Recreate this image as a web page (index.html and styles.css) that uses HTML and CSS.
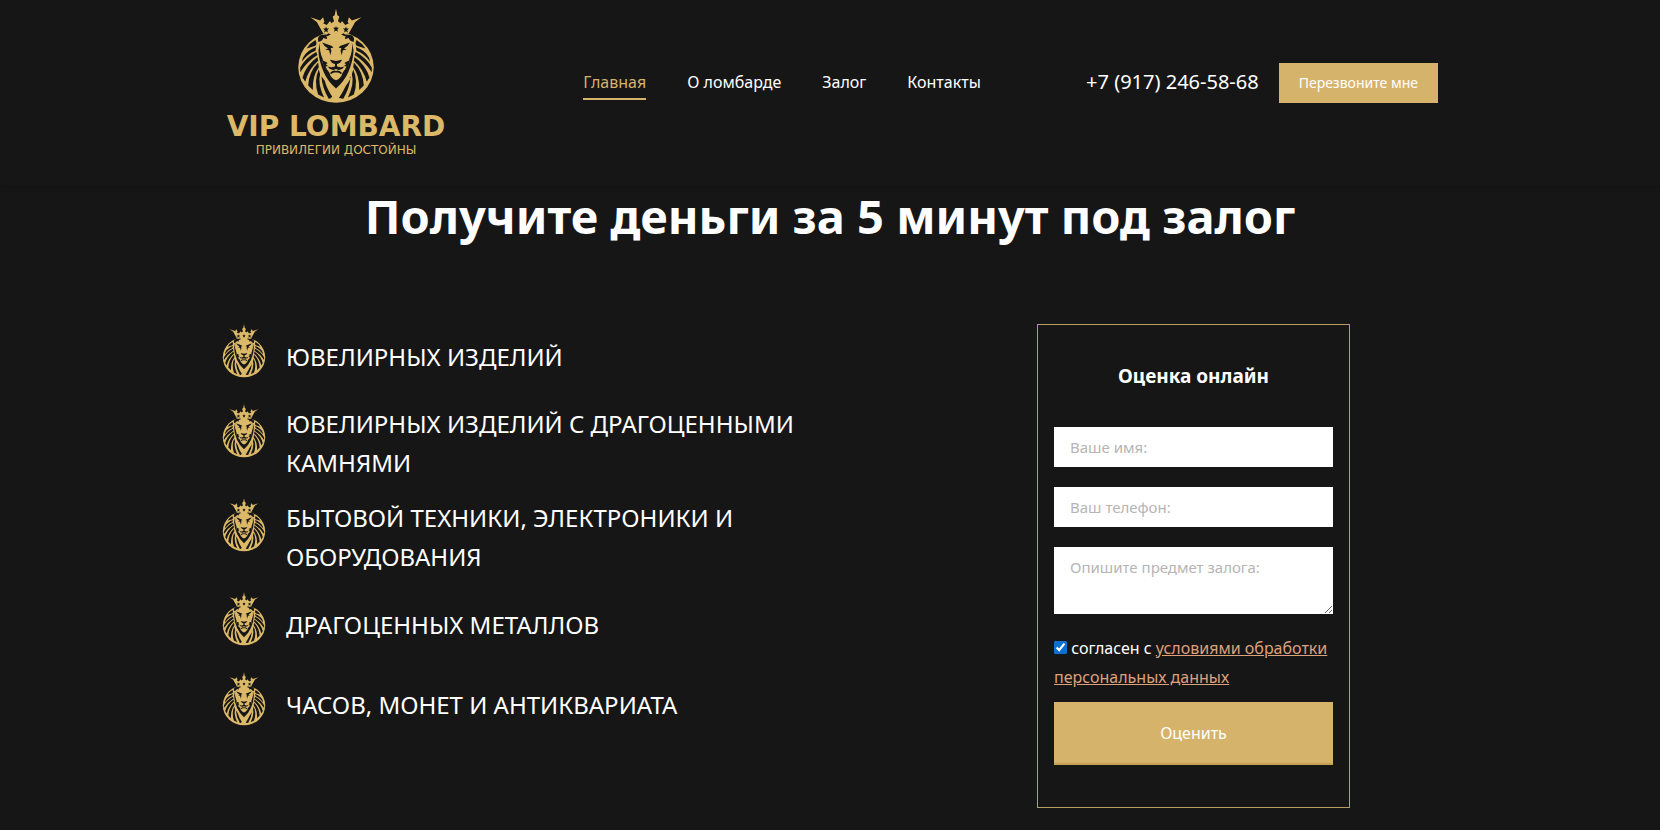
FILE: index.html
```html
<!DOCTYPE html>
<html lang="ru">
<head>
  <meta charset="UTF-8">
  <meta name="viewport" content="width=device-width, initial-scale=1.0">
  <title>VIP Lombard</title>
  <link rel="stylesheet" href="styles.css">
</head>
<body>
  <!-- Lion emblem, used in the logo and as list marker -->
  <svg class="sprite" aria-hidden="true">
    <symbol id="lion" viewBox="18 22 236 290">
      <g fill="#dcb968">
        <path d="M98 100 L78 64 L59 50 L88 60 L97 50 L101 64 L97 68 L108 73 L118 61 L122 68 L130 62 L126 48 L132 44 L136 24 L140 44 L146 48 L142 62 L150 68 L154 61 L164 73 L175 68 L171 64 L175 50 L184 60 L213 50 L194 64 L174 100 Z"/>
        <ellipse cx="136" cy="201" rx="114" ry="107"/>
      </g>
      <g fill="#161616">
        <path id="star" d="M136 76 L138.500 82 L145 82 L140 87 L142 94 L136 90 L130 94 L132 87 L127 82 L133.500 82 Z"/>
        <use href="#star" x="-30" y="2"/>
        <use href="#star" x="30" y="2"/>
        <g id="mane">
          <!-- ear -->
          <path d="M82 124 Q79 103 96 103 Q110 104 114 98 L120 102 Q112 107 106 108 Q112 111 108 116 L98 113 Q94 124 82 124 Z"/>
          <!-- slits between the locks -->
          <path d="M74 119 Q58 128 47 144 L74 136 Q80 130 74 119 Z"/>
          <path d="M76 140 Q48 150 36 172 L33 184 Q50 160 74 151 Z"/>
          <path d="M76 155 Q42 174 28 202 L28 216 Q50 182 80 164 Z"/>
          <path d="M80 170 Q46 194 35 232 L43 245 Q53 206 82 181 Z"/>
          <path d="M82 187 Q54 216 52 256 L66 270 Q64 228 84 201 Z"/>
          <path d="M84 208 Q68 242 82 283 L100 292 Q80 250 88 222 Z"/>
          <path d="M92 228 Q94 262 114 296 L127 294 Q108 266 102 242 Z"/>
          <!-- side of the face and chin -->
          <path d="M88 126 Q85 155 96 176 Q94 190 100 202 Q114 208 120 228 Q128 239 136 240 L136 265 Q110 242 99 216 Q84 182 83 150 Z"/>
          <!-- brow and eye -->
          <path d="M94 126 L124 137 L128 142 L120 143 L122 151 L119 165 L115 150 L103 147 L112 144 Q101 139 94 126 Z"/>
          <!-- nose and mouth -->
          <path d="M118 178 L136 182 L136 206 L128 209 Q114 208 112 199 Q124 204 133 198 L133 191 Q121 188 118 178 Z"/>
          <path d="M118 218 Q128 208 136 212 L136 217 Q126 215 121 222 Z"/>
          <path d="M96 180 L111 188 L105 192 L112 197 L104 199 L109 207 L98 202 Z"/>
        </g>
        <use href="#mane" transform="translate(272 0) scale(-1 1)"/>
      </g>
      <!-- locks crossing under the chin -->
      <path d="M176 232 Q160 262 122 300" fill="none" stroke="#dcb968" stroke-width="10"/>
    </symbol>
  </svg>

  <header class="header">
    <div class="container header-inner">
      <a class="logo" href="#">
        <svg class="logo-icon" aria-hidden="true"><use href="#lion"/></svg>
        <span class="logo-name">VIP LOMBARD</span>
        <span class="logo-slogan">ПРИВИЛЕГИИ ДОСТОЙНЫ</span>
      </a>
      <nav class="nav">
        <a class="nav-link active" href="#">Главная</a>
        <a class="nav-link" href="#">О ломбарде</a>
        <a class="nav-link" href="#">Залог</a>
        <a class="nav-link" href="#">Контакты</a>
      </nav>
      <div class="contacts">
        <a class="phone" href="tel:+79172465868">+7 (917) 246-58-68</a>
        <button class="call-btn" type="button">Перезвоните мне</button>
      </div>
    </div>
  </header>

  <main class="container">
    <h1>Получите деньги за 5 минут под залог</h1>
    <div class="content">
      <ul class="pledges">
        <li><svg class="pledge-icon" aria-hidden="true"><use href="#lion"/></svg><span>ЮВЕЛИРНЫХ ИЗДЕЛИЙ</span></li>
        <li><svg class="pledge-icon" aria-hidden="true"><use href="#lion"/></svg><span>ЮВЕЛИРНЫХ ИЗДЕЛИЙ С ДРАГОЦЕННЫМИ КАМНЯМИ</span></li>
        <li><svg class="pledge-icon" aria-hidden="true"><use href="#lion"/></svg><span>БЫТОВОЙ ТЕХНИКИ, ЭЛЕКТРОНИКИ И ОБОРУДОВАНИЯ</span></li>
        <li><svg class="pledge-icon" aria-hidden="true"><use href="#lion"/></svg><span>ДРАГОЦЕННЫХ МЕТАЛЛОВ</span></li>
        <li><svg class="pledge-icon" aria-hidden="true"><use href="#lion"/></svg><span>ЧАСОВ, МОНЕТ И АНТИКВАРИАТА</span></li>
      </ul>
      <form class="form">
        <h2>Оценка онлайн</h2>
        <input class="field" type="text" name="name" placeholder="Ваше имя:" aria-label="Ваше имя">
        <input class="field" type="tel" name="phone" placeholder="Ваш телефон:" aria-label="Ваш телефон">
        <textarea class="field area" name="item" placeholder="Опишите предмет залога:" aria-label="Опишите предмет залога"></textarea>
        <label class="agree">
          <input type="checkbox" name="agree" checked>
          согласен с <a href="#">условиями обработки персональных данных</a>
        </label>
        <button class="submit-btn" type="submit">Оценить</button>
      </form>
    </div>
  </main>
</body>
</html>
```
FILE: styles.css
```css
* { box-sizing: border-box; }
body { margin: 0; background: #161616; color: #fff; font-family: 'Noto Sans', 'Open Sans', sans-serif; font-size: 16px; }
a { color: inherit; text-decoration: none; }
button, input, textarea { font-family: inherit; }
.sprite { display: none; }
.container { max-width: 1248px; margin: 0 auto; padding: 0 16px; }

.header { padding: 8px 0 28px; box-shadow: 0 2px 6px rgba(0, 0, 0, 0.15); }
.header-inner { display: flex; align-items: center; justify-content: space-between; }
.logo { display: flex; flex-direction: column; align-items: center; width: 228px; color: #dcb968; }
.logo-icon { width: 80px; height: 96px; }
.logo-name { margin-top: 7px; font: bold 28px/32px 'DejaVu Sans', sans-serif; white-space: nowrap; }
.logo-slogan { font: 12px/14px 'DejaVu Sans', sans-serif; white-space: nowrap; }
.nav { display: flex; gap: 41px; padding-left: 28px; }
.nav-link { padding: 4px 0; line-height: 24px; border-bottom: 2px solid transparent; white-space: nowrap; }
.nav-link.active { color: #d6b36a; border-color: #d6b36a; }
.contacts { display: flex; align-items: center; gap: 20px; }
.phone { font-size: 20px; line-height: 28px; padding-bottom: 2px; white-space: nowrap; }
.call-btn { height: 40px; padding: 0 20px; background: #d6b36a; border: none; color: #fff; font-size: 14px; cursor: pointer; white-space: nowrap; }

h1 { margin: 0; font-size: 47px; line-height: 62px; text-align: center; }
.content { display: flex; justify-content: space-between; align-items: flex-start; margin-top: 77px; }
.pledges { list-style: none; margin: 0; padding: 0; width: 592px; display: flex; flex-direction: column; gap: 16px; font-size: 24px; line-height: 39px; }
.pledges li { display: flex; align-items: center; gap: 20px; min-height: 64px; }
.pledge-icon { flex: none; align-self: flex-start; width: 44px; height: 54px; }
.form { width: 313px; margin-right: 88px; padding: 36px 16px 42px; border: 1px solid #b89d62; display: flex; flex-direction: column; }
.form h2 { margin: 0 0 36px; font-size: 19px; line-height: 30px; text-align: center; }
.field { display: block; width: 100%; height: 40px; margin-bottom: 20px; padding: 0 16px; background: #fff; border: none; border-radius: 0; color: #333; font-size: 15px; }
.field::placeholder { color: #b5b5b5; opacity: 1; }
.area { height: 67px; padding-top: 10px; line-height: 20px; resize: vertical; }
.agree { margin-bottom: 10px; line-height: 29px; }
.agree input { margin: 0; accent-color: #0b70d0; }
.agree a { color: #dda17c; text-decoration: underline; }
.submit-btn { height: 63px; background: #d6b36a; border: none; border-bottom: 2px solid #c7a055; color: #fff; font-size: 16px; cursor: pointer; }
```
